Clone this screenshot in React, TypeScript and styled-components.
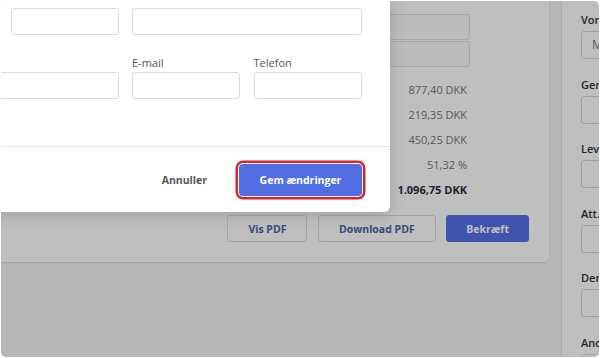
import styled, { createGlobalStyle } from 'styled-components';

const GlobalStyle = createGlobalStyle`
  html, body {
    margin: 0;
    padding: 0;
    background: #ffffff;
  }
  body {
    font-family: 'Open Sans', 'Liberation Sans', sans-serif;
    color: #333;
  }
  * { box-sizing: border-box; }
`;

const Frame = styled.div`
  position: relative;
  width: 598px;
  height: 356px;
  margin: 1px;
  border-radius: 5px;
  overflow: hidden;
  background: #f4f4f6;
`;

const Page = styled.div`
  display: flex;
  gap: 13px;
  margin: -10px 0 0 -10px;
`;

const Card = styled.section`
  flex: 0 0 558px;
  background: #fff;
  border-radius: 0 0 5px 0;
  box-shadow: 0 1px 2px rgba(0, 0, 0, 0.12);
  padding: 23px 20px 20px 20px;
  align-self: flex-start;
`;

const Summary = styled.div`
  display: grid;
  grid-template-columns: 1fr 240px;
  margin-right: 59px;
`;

const StackedInputs = styled.div`
  grid-column: 2;
  display: flex;
  flex-direction: column;
  gap: 1px;
  margin-bottom: 10px;
`;

const FlatInput = styled.div`
  height: 26px;
  border: 1px solid #e2e2e6;
  border-radius: 3px;
  background: #fbfbfc;
`;

const TotalRow = styled.div<{ $strong?: boolean }>`
  grid-column: 2;
  height: 25px;
  line-height: 25px;
  text-align: right;
  padding-right: 3px;
  font-size: 11px;
  font-weight: ${(p) => (p.$strong ? 700 : 400)};
  color: ${(p) => (p.$strong ? '#2a2d3e' : '#777')};
`;

const Actions = styled.div`
  display: flex;
  justify-content: flex-end;
  gap: 10.5px;
  margin-top: 13px;
`;

const CardButton = styled.button<{ $primary?: boolean }>`
  height: 27px;
  padding: 0 ${(p) => (p.$primary ? '19px' : '20px')};
  border-radius: 3px;
  font-family: inherit;
  font-size: 10.5px;
  font-weight: 700;
  border: 1px solid ${(p) => (p.$primary ? '#546ee6' : '#dcdce2')};
  background: ${(p) => (p.$primary ? '#546ee6' : '#fff')};
  color: ${(p) => (p.$primary ? '#fff' : '#50639f')};
`;

const Sidebar = styled.aside`
  flex: 0 0 220px;
  background: #fff;
  padding: 22px 19px 0 19px;
  display: flex;
  flex-direction: column;
  gap: 18.5px;
  height: 400px;
  box-shadow: -1px 0 0 #e6e6ea;
`;

const SideField = styled.div`
  display: flex;
  flex-direction: column;
  gap: 4px;
`;

const SideLabel = styled.label`
  font-size: 11px;
  line-height: 14px;
  font-weight: 600;
  color: #333;
  white-space: nowrap;
`;

const SideInput = styled.div`
  height: 28px;
  border: 1px solid #d8d8dc;
  border-radius: 3px;
  padding: 0 10px;
  font-size: 12px;
  line-height: 26px;
  color: #7a7a7a;
`;

const Overlay = styled.div`
  position: absolute;
  inset: 0;
  background: rgba(0, 0, 0, 0.25);
`;

const Modal = styled.div`
  position: absolute;
  left: -140px;
  top: -13px;
  width: 529px;
  background: #fff;
  border-radius: 6px;
  box-shadow: 0 4px 16px rgba(0, 0, 0, 0.15);
`;

const ModalBody = styled.div`
  display: grid;
  grid-template-columns: repeat(4, 108px);
  column-gap: 13.5px;
  row-gap: 20px;
  padding: 20px 28px 47px 28px;
`;

const Field = styled.div<{ $col: string }>`
  grid-column: ${(p) => p.$col};
  display: flex;
  flex-direction: column;
  gap: 2px;
`;

const Label = styled.label`
  font-size: 11px;
  line-height: 15px;
  color: #555;
`;

const Input = styled.input`
  height: 27px;
  border: 1px solid #d9d9de;
  border-radius: 3px;
  font-family: inherit;
  font-size: 12px;
  padding: 0 8px;
  outline: none;
  width: 100%;
`;

const ModalFooter = styled.div`
  display: flex;
  justify-content: flex-end;
  align-items: center;
  gap: 16px;
  height: 66px;
  padding: 0 28px 0 0;
  border-top: 1px solid #e6e6ec;
`;

const TextButton = styled.button`
  border: none;
  background: none;
  padding: 0 16px;
  font-family: inherit;
  font-size: 10.5px;
  font-weight: 700;
  color: #555;
`;

const SaveButton = styled.button`
  height: 32px;
  width: 123px;
  border: none;
  border-radius: 4px;
  background: #506de2;
  color: #fff;
  font-family: inherit;
  font-size: 10.5px;
  font-weight: 700;
  box-shadow: 0 0 0 1px #fff, 0 0 0 3.5px #d9262e;
`;

const sideFields = [
  { label: 'Vores reference', value: 'M' },
  { label: 'Generelt', value: '' },
  { label: 'Leveringsadresse', value: '' },
  { label: 'Att.', value: '' },
  { label: 'Deres reference', value: '' },
  { label: 'Andet', value: '' },
];

export default function App() {
  return (
    <>
      <GlobalStyle />
      <Frame>
        <Page>
          <Card>
            <Summary>
              <StackedInputs>
                <FlatInput />
                <FlatInput />
              </StackedInputs>
              <TotalRow>877,40 DKK</TotalRow>
              <TotalRow>219,35 DKK</TotalRow>
              <TotalRow>450,25 DKK</TotalRow>
              <TotalRow>51,32 %</TotalRow>
              <TotalRow $strong>1.096,75 DKK</TotalRow>
            </Summary>
            <Actions>
              <CardButton>Vis PDF</CardButton>
              <CardButton>Download PDF</CardButton>
              <CardButton $primary>Bekræft</CardButton>
            </Actions>
          </Card>
          <Sidebar>
            {sideFields.map((f) => (
              <SideField key={f.label}>
                <SideLabel>{f.label}</SideLabel>
                <SideInput>{f.value}</SideInput>
              </SideField>
            ))}
          </Sidebar>
        </Page>
        <Overlay />
        <Modal>
          <ModalBody>
            <Field $col="2">
              <Input />
            </Field>
            <Field $col="3 / span 2">
              <Input />
            </Field>
            <Field $col="1 / span 2">
              <Label>Kontaktperson</Label>
              <Input />
            </Field>
            <Field $col="3">
              <Label>E-mail</Label>
              <Input />
            </Field>
            <Field $col="4">
              <Label>Telefon</Label>
              <Input />
            </Field>
          </ModalBody>
          <ModalFooter>
            <TextButton>Annuller</TextButton>
            <SaveButton>Gem ændringer</SaveButton>
          </ModalFooter>
        </Modal>
      </Frame>
    </>
  );
}
